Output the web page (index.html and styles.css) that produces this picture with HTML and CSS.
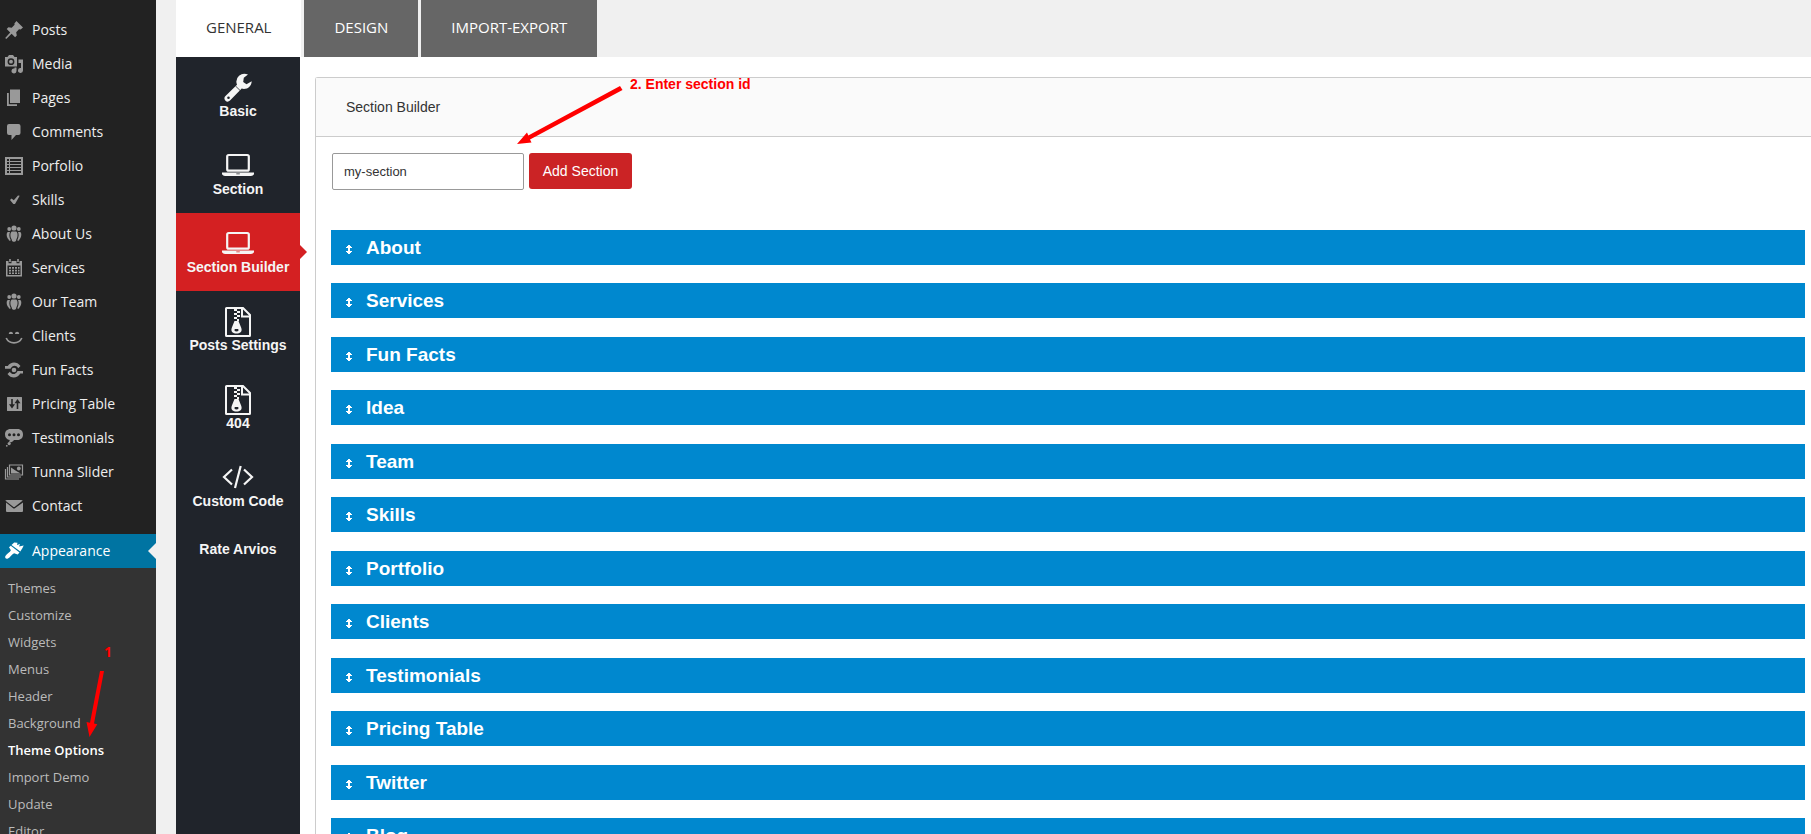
FILE: index.html
```html
<!DOCTYPE html>
<html lang="en">
<head>
<meta charset="utf-8">
<title>Theme Options</title>
<link rel="stylesheet" href="styles.css">
</head>
<body>
<svg class="sprite" aria-hidden="true">
  <symbol id="pin" viewBox="0 0 20 20"><path d="M10.400 3.600L12.400 1l6.600 6.600-2.400 2-1.600-.3-2.800 2.900.6 3.300-1.700 1.700-3.500-3.500L2.300 19l-1.100-1 5-5.600-3.500-3.500 1.700-1.700 3.300.6 2.900-3z"/></symbol>
  <symbol id="media" viewBox="0 0 20 20"><path fill-rule="evenodd" d="M1 3h2.500L5 1h4l1.500 2H13v9.500H1zM7 4.300a3.400 3.400 0 100 6.800 3.400 3.400 0 000-6.800z"/><circle cx="7" cy="7.700" r="1.900"/><path d="M14.500 5.500H19V16.500a2.500 2.500 0 11-2-2.500V9h-2.500zM12.500 13.500v3.500a2.500 2.500 0 11-2-2.500v-1z"/></symbol>
  <symbol id="pages" viewBox="0 0 20 20"><path d="M6 1.500h10V15H6zM3 5h1.800v11.200H13V18H3z"/></symbol>
  <symbol id="comment" viewBox="0 0 20 20"><path d="M5 2h9.500a2 2 0 012 2v7a2 2 0 01-2 2H12l-4.500 5V13H5a2 2 0 01-2-2V4a2 2 0 012-2z"/></symbol>
  <symbol id="list" viewBox="0 0 20 20"><path fill-rule="evenodd" d="M1 1h18v18H1zM3 3v2h2V3zM6 3v2h11V3zM3 6v2h2V6zM6 6v2h11V6zM3 9v2h2V9zM6 9v2h11V9zM3 12v2h2v-2zM6 12v2h11v-2zM3 15v2h2v-2zM6 15v2h11v-2z"/></symbol>
  <symbol id="check" viewBox="0 0 20 20"><path d="M6 10l1.500-1.500 2.300 1.800L14 5.500l1.700.3L11 14H9.300z"/></symbol>
  <symbol id="groups" viewBox="0 0 20 20"><circle cx="10" cy="4" r="2.600"/><circle cx="5.200" cy="5" r="1.900"/><circle cx="14.800" cy="5" r="1.900"/><path d="M7.800 7.500h4.400c1.600.8 1.900 5 .3 7.500l-.6 2c-.6.900-3.200.9-3.800 0l-.6-2C5.900 12.500 6.200 8.300 7.800 7.500zM3.800 8h2.200c-1 2-.8 5.500.5 7.500v1.200c-1 0-1.900-.4-2-1.500C2.500 13.500 2 9 3.800 8zM16.200 8H14c1 2 .8 5.500-.5 7.500v1.200c1 0 1.900-.4 2-1.500 2-1.700 2.500-6.200.7-7.200z"/></symbol>
  <symbol id="calendar" viewBox="0 0 20 20"><path fill-rule="evenodd" d="M2 3h2.500v2.300h3V3h5v2.300h3V3H18v15.500H2zM3.500 7.500V17h13V7.500z"/><path d="M5.200 1h1.600v3H5.200zM13.200 1h1.600v3h-1.600zM5 9h2v1.700H5zM8 9h2v1.700H8zM11 9h2v1.700h-2zM14 9h1.500v1.700H14zM5 11.700h2v1.700H5zM8 11.700h2v1.700H8zM11 11.700h2v1.700h-2zM14 11.700h1.500v1.700H14zM5 14.400h2V16H5zM8 14.400h2V16H8zM11 14.400h2V16h-2zM14 14.400h1.500V16H14z"/></symbol>
  <symbol id="smile" viewBox="0 0 20 20"><path d="M4.800 8c0-3 4.200-3 4.200 0zM11 8c0-3 4.200-3 4.200 0z"/><path d="M2.200 12c3 6.500 12.600 6.500 15.600 0" fill="none" stroke="currentColor" stroke-width="1.700"/></symbol>
  <symbol id="views" viewBox="0 0 20 20"><path d="M1 6h2.800C6.500 1.500 13 1 16.500 6l-2.300 2.200C12 5 8.500 5 6.500 8.800H1zM19 13.500h-2.800C13.500 18.500 7 19 3.500 14l2.300-2.200c2.200 3.200 5.700 3.200 7.700-.8H19z"/><circle cx="10" cy="10" r="2.300"/></symbol>
  <symbol id="sliders" viewBox="0 0 20 20"><path fill-rule="evenodd" d="M3.500 3h14q.5 0 .5.500v13q0 .5-.5.500h-14q-.5 0-.5-.5v-13q0-.5.5-.5zM7.200 5v5.300H5L8 14.500l3-4.200H8.800V5zM14.300 15V9.200H16.500l-3-4.200-3 4.200h2.200V15z"/></symbol>
  <symbol id="testimonial" viewBox="0 0 20 20"><path fill-rule="evenodd" d="M6.500 1h7C17 1 19 3.300 19 6.500S17 12 13.500 12H10c-1 2-3 2.500-5 2.300l.8-2.300C3 11.500 1 9.700 1 6.500S3 1 6.500 1zM5.500 5.200a1.500 1.500 0 100 3 1.500 1.500 0 000-3zM10 5.200a1.500 1.500 0 100 3 1.500 1.500 0 000-3zM14.500 5.200a1.500 1.500 0 100 3 1.500 1.500 0 000-3z"/><circle cx="5.200" cy="15.600" r="1.600"/><circle cx="2.800" cy="17.800" r=".9"/></symbol>
  <symbol id="gallery" viewBox="0 0 20 20"><g fill="none" stroke="currentColor" stroke-width="1.200"><path d="M5.500 3h13v10h-13z"/><path d="M3.500 5v10H17M1.500 7v10H15"/></g><path d="M7 11.500V5.500l4.500 3L14 10l3 1.500z"/><circle cx="14.800" cy="6.500" r="1.900"/></symbol>
  <symbol id="mail" viewBox="0 0 20 20"><path d="M3 4h14q2 0 1.500.8L10.500 11h-1L1.500 4.800Q1 4 3 4zM2 6.500l7.500 6h1l8.500-6V15q0 1-1 1H3q-1 0-1-1z"/></symbol>
  <symbol id="brush" viewBox="0 0 20 20"><path d="M10.200 1.500L7.500 4l8.800 6.600 2.200-3.600 1.200-2.500L15 5.500l1-2.500-3 1 .5-2.200zM6.800 4.800l8.700 6.600-1.800 2-3.600-1.200c-2 1-4 4.200-6.200 5.300-1.800.9-3.400-.8-2.500-2.500 1.200-2.200 4.700-3.700 5.500-5.700L5 6.200z"/></symbol>
  <symbol id="wrench" viewBox="0 0 30 30"><path fill-rule="evenodd" d="M28.700 8.200a7.800 7.800 0 01-10 7.400L7 27.500c-1.500 1.500-3.200 1.500-4.500.2-1.500-1.500-1.500-3.200 0-4.600L14 11.700A8 8 0 0125 1.600l-4.200 3.200-.6 4.200 3.300 2.300zM5.500 23.500a1.300 1.300 0 100 2.600 1.300 1.300 0 000-2.600z"/><path d="M12.500 13l4.500 4.400" stroke="#20242b" stroke-width=".8"/></symbol>
  <symbol id="laptop" viewBox="0 0 32 30"><path d="M5.200 5.500q0-1.500 1.500-1.500h18.600q1.500 0 1.500 1.500v12.700q0 1.500-1.500 1.500H6.700q-1.500 0-1.500-1.500z" fill="none" stroke="currentColor" stroke-width="2.200"/><path fill-rule="evenodd" d="M0 21.500h32v1.700q-1 1.800-3 1.800H3Q1 25 0 23.200zM14.300 22.400v.8h3.500v-.8z"/></symbol>
  <symbol id="zip" viewBox="0 0 32 30"><path d="M4.500 1H21l7 7v20.500q0 .5-.5.500H4.500q-.5 0-.5-.5v-27q0-.5.500-.5zM20 1v8.500h8" fill="none" stroke="currentColor" stroke-width="2"/><path d="M12 2h3v2h-3zM15 4h3v2h-3zM12 6h3v2h-3zM15 8h3v2h-3zM12 10h3v2h-3zM15 12h2v2h-2z"/><path fill-rule="evenodd" d="M12.500 14h4l2.800 7c1.300 4-1.500 5.500-4.800 5.500s-6-1.500-4.800-5.500zM12.800 22q-1 2.500 1.700 2.500t1.700-2.500z"/></symbol>
  <symbol id="code" viewBox="0 0 32 30"><path d="M10 6.500L2 14l8 7.500M22 6.500l8 7.500-8 7.500M18.700 3l-5.700 22" fill="none" stroke="currentColor" stroke-width="2.200"/></symbol>
  <symbol id="sort" viewBox="0 0 6 9"><path d="M2 0h2v1h1v1h1v1H4v3h2v1H5v1H4v1H2V8H1V7H0V6h2V3H0V2h1V1h1z"/></symbol>
</svg>

<div class="admin">
  <nav class="sidebar" aria-label="Admin menu">
    <ul class="menu">
      <li><a class="menu-link" href="#"><svg class="menu-icon"><use href="#pin"/></svg>Posts</a></li>
      <li><a class="menu-link" href="#"><svg class="menu-icon"><use href="#media"/></svg>Media</a></li>
      <li><a class="menu-link" href="#"><svg class="menu-icon"><use href="#pages"/></svg>Pages</a></li>
      <li><a class="menu-link" href="#"><svg class="menu-icon"><use href="#comment"/></svg>Comments</a></li>
      <li><a class="menu-link" href="#"><svg class="menu-icon"><use href="#list"/></svg>Porfolio</a></li>
      <li><a class="menu-link" href="#"><svg class="menu-icon"><use href="#check"/></svg>Skills</a></li>
      <li><a class="menu-link" href="#"><svg class="menu-icon"><use href="#groups"/></svg>About Us</a></li>
      <li><a class="menu-link" href="#"><svg class="menu-icon"><use href="#calendar"/></svg>Services</a></li>
      <li><a class="menu-link" href="#"><svg class="menu-icon"><use href="#groups"/></svg>Our Team</a></li>
      <li><a class="menu-link" href="#"><svg class="menu-icon"><use href="#smile"/></svg>Clients</a></li>
      <li><a class="menu-link" href="#"><svg class="menu-icon"><use href="#views"/></svg>Fun Facts</a></li>
      <li><a class="menu-link" href="#"><svg class="menu-icon"><use href="#sliders"/></svg>Pricing Table</a></li>
      <li><a class="menu-link" href="#"><svg class="menu-icon"><use href="#testimonial"/></svg>Testimonials</a></li>
      <li><a class="menu-link" href="#"><svg class="menu-icon"><use href="#gallery"/></svg>Tunna Slider</a></li>
      <li><a class="menu-link" href="#"><svg class="menu-icon"><use href="#mail"/></svg>Contact</a></li>
    </ul>
    <a class="menu-link menu-current" href="#"><svg class="menu-icon"><use href="#brush"/></svg>Appearance</a>
    <ul class="submenu">
      <li><a href="#">Themes</a></li>
      <li><a href="#">Customize</a></li>
      <li><a href="#">Widgets</a></li>
      <li><a href="#">Menus</a></li>
      <li><a href="#">Header</a></li>
      <li><a href="#">Background</a></li>
      <li><a class="submenu-current" href="#">Theme Options</a></li>
      <li><a href="#">Import Demo</a></li>
      <li><a href="#">Update</a></li>
      <li><a href="#">Editor</a></li>
    </ul>
  </nav>

  <main class="options">
    <div class="tabs" role="tablist">
      <button class="tab tab-active" type="button" role="tab" aria-selected="true">GENERAL</button>
      <button class="tab" type="button" role="tab" aria-selected="false">DESIGN</button>
      <button class="tab" type="button" role="tab" aria-selected="false">IMPORT-EXPORT</button>
    </div>
    <div class="workspace">
      <nav class="groups" aria-label="Option groups">
        <a class="group" href="#"><svg class="group-icon"><use href="#wrench"/></svg>Basic</a>
        <a class="group" href="#"><svg class="group-icon"><use href="#laptop"/></svg>Section</a>
        <a class="group group-active" href="#"><svg class="group-icon"><use href="#laptop"/></svg>Section Builder</a>
        <a class="group" href="#"><svg class="group-icon"><use href="#zip"/></svg>Posts Settings</a>
        <a class="group" href="#"><svg class="group-icon"><use href="#zip"/></svg>404</a>
        <a class="group" href="#"><svg class="group-icon"><use href="#code"/></svg>Custom Code</a>
        <a class="group" href="#">Rate Arvios</a>
      </nav>
      <section class="panel">
        <h2 class="panel-title">Section Builder</h2>
        <div class="panel-body">
          <form class="add-form">
            <input class="add-input" type="text" value="my-section" aria-label="Section id">
            <button class="add-button" type="button">Add Section</button>
          </form>
          <ul class="sections">
            <li class="section-row"><svg class="sort-icon"><use href="#sort"/></svg><h3>About</h3></li>
            <li class="section-row"><svg class="sort-icon"><use href="#sort"/></svg><h3>Services</h3></li>
            <li class="section-row"><svg class="sort-icon"><use href="#sort"/></svg><h3>Fun Facts</h3></li>
            <li class="section-row"><svg class="sort-icon"><use href="#sort"/></svg><h3>Idea</h3></li>
            <li class="section-row"><svg class="sort-icon"><use href="#sort"/></svg><h3>Team</h3></li>
            <li class="section-row"><svg class="sort-icon"><use href="#sort"/></svg><h3>Skills</h3></li>
            <li class="section-row"><svg class="sort-icon"><use href="#sort"/></svg><h3>Portfolio</h3></li>
            <li class="section-row"><svg class="sort-icon"><use href="#sort"/></svg><h3>Clients</h3></li>
            <li class="section-row"><svg class="sort-icon"><use href="#sort"/></svg><h3>Testimonials</h3></li>
            <li class="section-row"><svg class="sort-icon"><use href="#sort"/></svg><h3>Pricing Table</h3></li>
            <li class="section-row"><svg class="sort-icon"><use href="#sort"/></svg><h3>Twitter</h3></li>
            <li class="section-row"><svg class="sort-icon"><use href="#sort"/></svg><h3>Blog</h3></li>
          </ul>
        </div>
      </section>
    </div>
  </main>
</div>

<span class="note note-one">1</span>
<svg class="arrow arrow-one" viewBox="0 0 20 68"><path d="M14 1h4L8 53.500l3.300.7L3.500 67 .5 52l3.500.7z"/></svg>
<span class="note note-two">2. Enter section id</span>
<svg class="arrow arrow-two" viewBox="0 0 108 60"><path d="M104 1l2.500 4L14 54.500l1.500 3L1 59l10-11.500 1.300 3z"/></svg>
</body>
</html>
```
FILE: styles.css
```css
* { box-sizing: border-box; }

body {
  margin: 0;
  height: 100vh;
  overflow: hidden;
  background: #f0f0f0;
  font-family: "Liberation Sans", Arial, sans-serif;
  font-size: 14px;
  color: #333;
}

ul { margin: 0; padding: 0; list-style: none; }
a { text-decoration: none; color: inherit; }
svg { fill: currentColor; flex: none; }
.sprite { position: absolute; width: 0; height: 0; }

.admin {
  display: grid;
  grid-template-columns: 156px 1fr;
  column-gap: 20px;
  height: 100%;
}

/* Admin menu */
.sidebar {
  display: flex;
  flex-direction: column;
  min-height: 0;
  overflow: hidden;
  padding-top: 13px;
  background: #222;
  font-family: "Open Sans", sans-serif;
  color: #eee;
}
.menu { padding-bottom: 11px; }
.menu-link {
  display: flex;
  align-items: center;
  gap: 8px;
  padding: 7px 4px;
  line-height: 20px;
}
.menu-icon { width: 20px; height: 20px; color: #999; }
.menu-current {
  position: relative;
  background: #0074a2;
  color: #fff;
}
.menu-current .menu-icon { color: #fff; }
.menu-current::after {
  content: "";
  position: absolute;
  right: 0;
  top: 9px;
  border: 8px solid transparent;
  border-left: 0;
  border-right-color: #f0f0f0;
}
.submenu {
  flex: 1 0 auto;
  padding-top: 7px;
  background: #333;
  font-size: 13px;
  line-height: 27px;
  color: #bbb;
}
.submenu a { display: block; padding: 0 8px; }
.submenu .submenu-current { font-weight: 600; color: #fff; }

/* Tabs */
.options {
  display: flex;
  flex-direction: column;
  min-width: 0;
  min-height: 0;
}
.tabs { display: flex; gap: 3px; }
.tab {
  padding: 17px 30px 19px;
  border: 0;
  background: #666;
  color: #fff;
  font: 15px/21px "Open Sans", sans-serif;
}
.tab-active { background: #fff; color: #333; }

/* Option groups */
.workspace {
  display: flex;
  flex: 1;
  min-height: 0;
  background: #fff;
}
.groups {
  flex: 0 0 124px;
  background: #20242b;
  color: #f5f5f5;
  font-weight: bold;
  line-height: 16px;
}
.group {
  position: relative;
  display: flex;
  flex-direction: column;
  align-items: center;
  padding: 16px 0;
  white-space: nowrap;
}
.group-icon { width: 32px; height: 30px; }
.group-active { background: #d42022; }
.group-active::after {
  content: "";
  position: absolute;
  left: 100%;
  top: 32px;
  border: 7px solid transparent;
  border-right: 0;
  border-left-color: #d42022;
}

/* Section builder */
.panel {
  flex: 1;
  min-width: 0;
  margin: 20px 0 0 15px;
  border: 1px solid #ccc;
  border-width: 1px 0 0 1px;
  border-top-left-radius: 3px;
}
.panel-title {
  margin: 0;
  padding: 19px 30px;
  border-bottom: 1px solid #ccc;
  background: #fafafa;
  font-size: 14px;
  font-weight: normal;
  line-height: 20px;
}
.panel-body { padding: 16px 6px 0 15px; }
.add-form { display: flex; gap: 5px; padding-left: 1px; }
.add-input {
  width: 192px;
  height: 37px;
  padding: 0 11px;
  border: 1px solid #999;
  border-radius: 2px;
  background: #fff;
  color: #333;
  font: 13px "Liberation Sans", Arial, sans-serif;
}
.add-button {
  min-width: 103px;
  height: 36px;
  padding: 0 13px;
  border: 0;
  border-radius: 3px;
  background: #cb2325;
  color: #fff;
  font: 14px "Liberation Sans", Arial, sans-serif;
}
.sections { margin-top: 40px; }
.section-row {
  display: flex;
  align-items: center;
  gap: 14px;
  height: 35px;
  margin-bottom: 18px;
  padding-left: 15px;
  background: #0088cf;
  color: #fff;
}
.section-row:nth-child(even) { margin-bottom: 19px; }
.section-row h3 { margin: 0; font-size: 19px; line-height: 35px; }
.sort-icon { width: 6px; height: 9px; margin-top: 4px; }

/* Guide notes laid over the page */
.note {
  position: absolute;
  color: #f00;
  font-weight: bold;
  line-height: 16px;
}
.note-one { left: 104px; top: 644px; font-family: "Open Sans", sans-serif; }
.note-two { left: 630px; top: 76px; }
.arrow { position: absolute; color: #f00; }
.arrow-one { left: 86px; top: 670px; width: 20px; height: 68px; }
.arrow-two { left: 516px; top: 85px; width: 108px; height: 60px; }
```
